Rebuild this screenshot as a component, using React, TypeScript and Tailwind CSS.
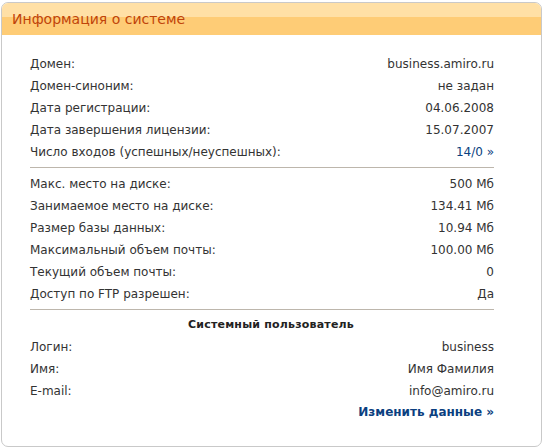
import React from "react";

const font = { fontFamily: '"DejaVu Sans", Verdana, sans-serif' };

function Row({ label, value, link }: { label: string; value: string; link?: boolean }) {
  return (
    <div className="flex h-[22px] items-center justify-between">
      <span>{label}</span>
      <span className={link ? "text-[#0b3f80]" : ""}>{value}</span>
    </div>
  );
}

export default function App() {
  return (
    <div className="w-[544px] h-[448px] bg-white pl-px pt-[2px]" style={font}>
      <div className="w-[541px] h-[445px] rounded-[7px] border border-[#c9c9c9] overflow-hidden flex flex-col text-[12px] text-[#333]">
        <div className="h-[14px] bg-[#ffe0a6]" />
        <div className="h-[18px] bg-[#fecc76] relative">
          <span className="absolute left-[10px] top-[-7px] text-[14px] text-[#c0440a] leading-[18px]">Информация о системе</span>
        </div>
        <div className="pl-[28px] pr-[47px] pt-[18px] flex flex-col">
          <Row label="Домен:" value="business.amiro.ru" />
          <Row label="Домен-синоним:" value="не задан" />
          <Row label="Дата регистрации:" value="04.06.2008" />
          <Row label="Дата завершения лицензии:" value="15.07.2007" />
          <Row label="Число входов (успешных/неуспешных):" value="14/0 »" link />
          <div className="h-px bg-[#bdb6ac] mt-[4px] mb-[5px]" />
          <Row label="Макс. место на диске:" value="500 Мб" />
          <Row label="Занимаемое место на диске:" value="134.41 Мб" />
          <Row label="Размер базы данных:" value="10.94 Мб" />
          <Row label="Максимальный объем почты:" value="100.00 Мб" />
          <Row label="Текущий объем почты:" value="0" />
          <Row label="Доступ по FTP разрешен:" value="Да" />
          <div className="h-px bg-[#bdb6ac] mt-[4px]" />
          <div className="h-[26px] pt-[4px] pl-[18px] flex items-center justify-center font-bold text-[11px] tracking-[0.2px] text-[#222]">Системный пользователь</div>
          <Row label="Логин:" value="business" />
          <Row label="Имя:" value="Имя Фамилия" />
          <Row label="E-mail:" value="info@amiro.ru" />
          <div className="flex h-[20px] items-center justify-end font-bold text-[12px] text-[#0b3f80]">Изменить данные »</div>
        </div>
      </div>
    </div>
  );
}
